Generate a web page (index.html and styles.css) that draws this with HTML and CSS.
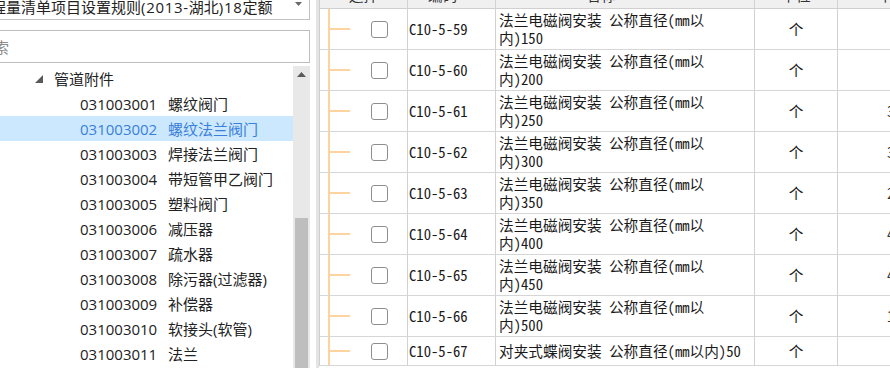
FILE: index.html
```html
<!DOCTYPE html>
<html lang="zh-CN">
<head>
<meta charset="utf-8">
<title>定额</title>
<link rel="stylesheet" href="styles.css">
</head>
<body>
<div class="app">
  <aside class="left">
    <div class="combo">
      <span class="combo-text">工程量清单项目设置规则<span class="wide">(2013-</span>湖北<span class="wide">)18</span>定额</span>
      <svg class="combo-arrow" width="7" height="4" viewBox="0 0 7 4"><polygon points="0,0 7,0 3.5,4" fill="#6a6a6a"/></svg>
    </div>
    <div class="search"><span class="placeholder">搜索</span></div>
    <div class="tree">
      <div class="tree-list">
        <div class="tree-row group">
          <svg class="twisty" width="8" height="8" viewBox="0 0 8 8"><polygon points="8,0 8,8 0,8" fill="#595959"/></svg>
          <span>管道附件</span>
        </div>
        <div class="tree-row item"><span class="code">031003001</span><span>螺纹阀门</span></div>
        <div class="tree-row item selected"><span class="code">031003002</span><span>螺纹法兰阀门</span></div>
        <div class="tree-row item"><span class="code">031003003</span><span>焊接法兰阀门</span></div>
        <div class="tree-row item"><span class="code">031003004</span><span>带短管甲乙阀门</span></div>
        <div class="tree-row item"><span class="code">031003005</span><span>塑料阀门</span></div>
        <div class="tree-row item"><span class="code">031003006</span><span>减压器</span></div>
        <div class="tree-row item"><span class="code">031003007</span><span>疏水器</span></div>
        <div class="tree-row item"><span class="code">031003008</span><span>除污器(过滤器)</span></div>
        <div class="tree-row item"><span class="code">031003009</span><span>补偿器</span></div>
        <div class="tree-row item"><span class="code">031003010</span><span>软接头(软管)</span></div>
        <div class="tree-row item"><span class="code">031003011</span><span>法兰</span></div>
      </div>
      <div class="scrollbar">
        <div class="sb-up"><svg width="9" height="5" viewBox="0 0 9 5"><polygon points="0,5 9,5 4.5,0" fill="#5a5a5a"/></svg></div>
        <div class="sb-track"></div>
        <div class="sb-thumb"></div>
      </div>
    </div>
  </aside>
  <main class="right">
    <div class="grid">
      <div class="hd c1">选择</div>
      <div class="hd c2">编码</div>
      <div class="hd c3">名称</div>
      <div class="hd c4">单位</div>
      <div class="hd c5">单价</div>

      <div class="cell c1"><span class="branch"><span class="stub"></span></span><span class="check"></span></div>
      <div class="cell c2">C10-5-59</div>
      <div class="cell c3">法兰电磁阀安装 公称直径(mm以<br>内)150</div>
      <div class="cell c4">个</div>
      <div class="cell c5"></div>

      <div class="cell c1"><span class="branch"><span class="stub"></span></span><span class="check"></span></div>
      <div class="cell c2">C10-5-60</div>
      <div class="cell c3">法兰电磁阀安装 公称直径(mm以<br>内)200</div>
      <div class="cell c4">个</div>
      <div class="cell c5"></div>

      <div class="cell c1"><span class="branch"><span class="stub"></span></span><span class="check"></span></div>
      <div class="cell c2">C10-5-61</div>
      <div class="cell c3">法兰电磁阀安装 公称直径(mm以<br>内)250</div>
      <div class="cell c4">个</div>
      <div class="cell c5">3</div>

      <div class="cell c1"><span class="branch"><span class="stub"></span></span><span class="check"></span></div>
      <div class="cell c2">C10-5-62</div>
      <div class="cell c3">法兰电磁阀安装 公称直径(mm以<br>内)300</div>
      <div class="cell c4">个</div>
      <div class="cell c5">3</div>

      <div class="cell c1"><span class="branch"><span class="stub"></span></span><span class="check"></span></div>
      <div class="cell c2">C10-5-63</div>
      <div class="cell c3">法兰电磁阀安装 公称直径(mm以<br>内)350</div>
      <div class="cell c4">个</div>
      <div class="cell c5">2</div>

      <div class="cell c1"><span class="branch"><span class="stub"></span></span><span class="check"></span></div>
      <div class="cell c2">C10-5-64</div>
      <div class="cell c3">法兰电磁阀安装 公称直径(mm以<br>内)400</div>
      <div class="cell c4">个</div>
      <div class="cell c5">4</div>

      <div class="cell c1"><span class="branch"><span class="stub"></span></span><span class="check"></span></div>
      <div class="cell c2">C10-5-65</div>
      <div class="cell c3">法兰电磁阀安装 公称直径(mm以<br>内)450</div>
      <div class="cell c4">个</div>
      <div class="cell c5">4</div>

      <div class="cell c1"><span class="branch"><span class="stub"></span></span><span class="check"></span></div>
      <div class="cell c2">C10-5-66</div>
      <div class="cell c3">法兰电磁阀安装 公称直径(mm以<br>内)500</div>
      <div class="cell c4">个</div>
      <div class="cell c5">1</div>

      <div class="cell c1"><span class="branch"><span class="stub"></span></span><span class="check"></span></div>
      <div class="cell c2">C10-5-67</div>
      <div class="cell c3">对夹式蝶阀安装 公称直径(mm以内)50</div>
      <div class="cell c4">个</div>
      <div class="cell c5"></div>
    </div>
  </main>
</div>
</body>
</html>
```

FILE: styles.css
```css
html, body {
  margin: 0;
  padding: 0;
  background: #ffffff;
  overflow: hidden;
}

.app {
  display: flex;
  width: 890px;
  height: 368px;
  overflow: hidden;
}

/* ---------- left panel ---------- */
.left {
  width: 310px;
  flex: none;
  display: flex;
  flex-direction: column;
  font-family: "Open Sans", "Noto Sans CJK SC", sans-serif;
  font-size: 15px;
  color: #222222;
}

.combo {
  box-sizing: border-box;
  margin-left: -40px;
  margin-top: -6px;
  width: 350px;
  height: 26px;
  border: 1px solid #c2c2c2;
  display: flex;
  align-items: center;
  padding-left: 15px;
  padding-right: 7px;
}

.combo-text {
  flex: 1;
  white-space: nowrap;
  line-height: 18px;
}

.wide {
  letter-spacing: 0.7px;
}

.combo-arrow {
  align-self: flex-start;
  margin-top: 7px;
}

.search {
  box-sizing: border-box;
  margin-left: -40px;
  margin-top: 10px;
  width: 350px;
  height: 33px;
  border: 1px solid #bdbdbd;
  display: flex;
  align-items: center;
  padding-left: 18px;
}

.placeholder {
  color: #8a8a8a;
  line-height: 18px;
}

.tree {
  margin-top: 3px;
  flex: 1;
  display: flex;
  min-height: 0;
}

.tree-list {
  flex: 1;
}

.tree-row {
  height: 25px;
  display: flex;
  align-items: center;
  white-space: nowrap;
}

.tree-row.group {
  padding-left: 35px;
}

.twisty {
  margin-right: 11px;
}

.tree-row.item {
  padding-left: 80px;
}

.code {
  width: 88px;
  flex: none;
}

.tree-row.selected {
  background: #cce8ff;
  color: #3a7fd8;
}

.scrollbar {
  width: 17px;
  flex: none;
  background: #e8e8e8;
  display: flex;
  flex-direction: column;
}

.sb-up {
  height: 17px;
  display: flex;
  align-items: center;
  justify-content: center;
}

.sb-track {
  height: 135px;
  flex: none;
}

.sb-thumb {
  flex: 1;
  margin: 0 2px;
  background: #bebebe;
}

/* ---------- right panel ---------- */
.right {
  margin-left: 6px;
  flex: 1;
  border-left: 3px solid #e4e4e4;
  overflow: hidden;
}

.grid {
  margin-top: -13px;
  display: grid;
  grid-template-columns: 88px 88px 259px 83px 200px;
  grid-template-rows: 22px repeat(8, 41px) 29px;
  border-left: 1px solid #cfcfcf;
  font-family: "Noto Sans Mono CJK SC", "Noto Sans CJK SC", monospace;
  font-size: 14.67px;
  color: #1a1a1a;
}

.hd, .cell {
  box-sizing: border-box;
  border-right: 1px solid #d2d2d2;
  border-bottom: 1px solid #d6d6d6;
  white-space: nowrap;
  overflow: hidden;
}

.hd {
  background: #f0f0f0;
  line-height: 15px;
  color: #333333;
  border-bottom-color: #cfcfcf;
}

.hd.c1, .hd.c4 { text-align: center; }
.hd.c2 { padding-left: 20px; }
.hd.c3 { padding-left: 90px; }
.hd.c5 { padding-left: 40px; }

.cell {
  display: flex;
  align-items: center;
  line-height: 18px;
}

.cell.c1 {
  align-items: stretch;
}

.branch {
  margin-left: 8px;
  width: 20px;
  border-left: 2px solid #fdd3a0;
  display: flex;
  align-items: center;
}

.stub {
  width: 20px;
  height: 2px;
  background: #fdd3a0;
}

.check {
  align-self: center;
  margin-left: 21px;
  box-sizing: border-box;
  width: 17px;
  height: 17px;
  border: 1px solid #8e8e8e;
  border-radius: 3px;
  background: #ffffff;
}

.cell.c2 {
  padding-left: 1px;
}

.cell.c3 {
  padding-left: 3px;
}

.cell.c4 {
  justify-content: center;
}

.cell.c5 {
  padding-left: 49px;
  color: #333333;
}
```
